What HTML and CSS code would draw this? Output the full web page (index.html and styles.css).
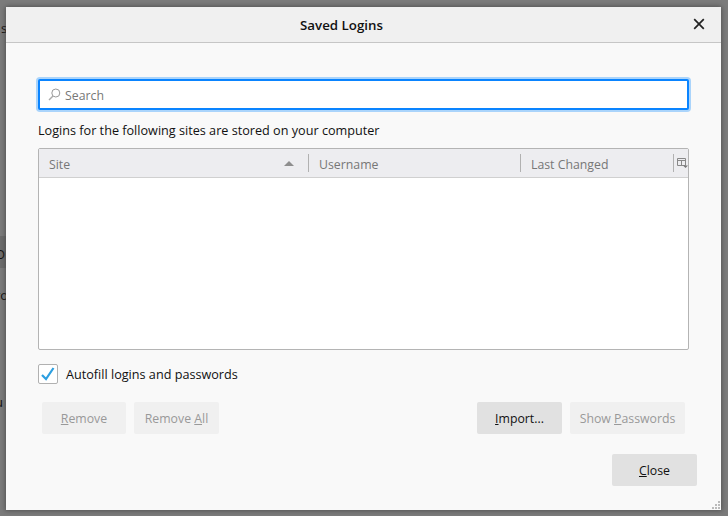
FILE: index.html
```html
<!DOCTYPE html>
<html lang="en">
<head>
<meta charset="utf-8">
<title>Saved Logins</title>
<link rel="stylesheet" href="styles.css">
</head>
<body>
<div class="behind">
  <span class="frag frag-s">s</span>
  <span class="frag-band"></span>
  <span class="frag frag-o">O</span>
  <span class="frag frag-r">ro</span>
  <span class="frag frag-u">u</span>
</div>
<main class="dialog">
  <header class="titlebar">
    <h1 class="title">Saved Logins</h1>
    <svg class="close-x" width="12" height="12" viewBox="0 0 12 12" aria-label="Close"><path d="M1.2 1.2 10.8 10.8M10.8 1.2 1.2 10.8" stroke="#222" stroke-width="1.7" fill="none"/></svg>
  </header>
  <div class="content">
    <div class="search">
      <svg class="search-icon" width="13" height="13" viewBox="0 0 13 13"><circle cx="7.8" cy="5" r="4" stroke="#999" stroke-width="1" fill="none"/><path d="M5 8 1 12" stroke="#aaa" stroke-width="1.5" fill="none"/></svg>
      <span class="placeholder">Search</span>
    </div>
    <p class="intro">Logins for the following sites are stored on your computer</p>
    <div class="table">
      <div class="thead">
        <div class="th th-site"><span>Site</span><i class="sort"></i></div>
        <div class="th th-user">Username</div>
        <div class="th th-date">Last Changed</div>
        <div class="th th-pick">
          <svg width="11" height="11" viewBox="0 0 11 11"><path d="M.5 .5h8v7h-8zM.5 2.5h8M4.5 2.5v5" stroke="#888" fill="none"/><path d="M6 7.5h5L8.5 10z" fill="#777"/></svg>
        </div>
      </div>
    </div>
    <label class="autofill">
      <span class="checkbox"><svg width="16" height="14" viewBox="0 0 16 14"><path d="M2 8l4 4 7.5-11" stroke="#2d9fe0" stroke-width="2.2" fill="none"/></svg></span>
      Autofill logins and passwords
    </label>
    <div class="actions">
      <div class="group">
        <button class="btn off w-remove" disabled><u>R</u>emove</button>
        <button class="btn off w-all" disabled>Remove <u>A</u>ll</button>
      </div>
      <div class="group">
        <button class="btn w-import"><u>I</u>mport...</button>
        <button class="btn off w-show" disabled>Show <u>P</u>asswords</button>
      </div>
    </div>
    <div class="footer">
      <button class="btn w-close"><u>C</u>lose</button>
    </div>
  </div>
  <svg class="grip" width="9" height="9" viewBox="0 0 9 9"><path d="M7 1h2v2H7zM4 4h2v2H4zM7 4h2v2H7zM1 7h2v2H1zM4 7h2v2H4zM7 7h2v2H7z" fill="#bbb"/></svg>
</main>
</body>
</html>
```
FILE: styles.css
```css
* { box-sizing: border-box; }
html, body { margin: 0; height: 100%; }
body {
  position: relative;
  overflow: hidden;
  background: #7b7b7b;
  font-family: "Open Sans", "Noto Sans", sans-serif;
  font-size: 12.65px;
  color: #111;
  padding: 7px 7px 6px 6px;
}
.behind { position: absolute; inset: 0; color: #111; }
.frag { position: absolute; left: -1px; line-height: 16px; font-size: 13px; }
.frag-s { top: 20px; left: 1px; }
.frag-o { top: 246px; left: -5px; }
.frag-r { top: 287px; left: -5px; }
.frag-u { top: 394px; left: -5px; }
.frag-band { position: absolute; left: 0; top: 236px; width: 6px; height: 32px; background: #6c6c6c; }
.dialog {
  position: relative;
  height: 503px;
  background: #f9f9f9;
  border-radius: 3px 3px 0 0;
  box-shadow: 0 0 4px 1px rgba(60,60,60,.6);
  display: flex;
  flex-direction: column;
}
.titlebar {
  height: 36px;
  flex: none;
  background: #f0f0f0;
  border-bottom: 1px solid #c6c6c6;
  display: flex;
  align-items: center;
  justify-content: center;
  padding-right: 44px;
  position: relative;
}
.title { margin: 0; font-size: 13.3px; font-weight: 600; color: #111; line-height: 36px; }
.close-x { position: absolute; right: 16px; top: 11px; }
.content { padding: 36px 32px 0 32px; display: flex; flex-direction: column; flex: 1; }
.search {
  height: 31px;
  background: #fff;
  border: 2px solid #0a84ff;
  border-radius: 2px;
  box-shadow: 0 0 0 2px #aad4fb;
  display: flex;
  align-items: center;
  padding-left: 8px;
  gap: 4px;
}
.placeholder { color: #777; line-height: 26px; font-size: 12.3px; margin-top: 2px; }
.intro { margin: 11px 0 0; line-height: 18px; height: 18px; }
.table {
  margin-top: 9px;
  height: 202px;
  flex: none;
  background: #fff;
  border: 1px solid #b4b4b4;
  border-radius: 2px;
}
.thead {
  height: 29px;
  background: #ededf0;
  border-bottom: 1px solid #d0d0d0;
  display: flex;
  align-items: center;
  color: #777;
  font-size: 12.3px;
}
.th { height: 18px; line-height: 22px; padding-left: 10px; border-left: 1px solid #b1b1b1; }
.th-site { width: 269px; border-left: 0; display: flex; justify-content: space-between; align-items: flex-start; padding-right: 14px; }
.th-user { width: 212px; }
.th-date { width: 153px; }
.th-pick { flex: 1; padding: 4px 0 0 3px; }
.th-pick svg { display: block; }
.sort { align-self: center; width: 0; height: 0; border: 5px solid transparent; border-top: 0; border-bottom: 5px solid #8e8e8e; }
.autofill { margin-top: 14px; height: 20px; display: flex; align-items: center; gap: 8px; }
.checkbox {
  width: 20px; height: 20px;
  background: #fff;
  border: 1px solid #b1b1b1;
  border-radius: 2px;
  display: flex;
  align-items: center;
  justify-content: center;
}
.actions { margin-top: 18px; display: flex; justify-content: space-between; padding: 0 4px; }
.group { display: flex; gap: 8px; }
.btn {
  height: 32px;
  border: 0;
  border-radius: 2px;
  background: #e1e1e1;
  color: #111;
  font: inherit;
  font-size: 12.3px;
  padding: 0;
}
.btn.off { background: #f0f0f0; color: #999; }
.w-remove { width: 84px; }
.w-all { width: 85px; }
.w-import { width: 85px; }
.w-show { width: 115px; }
.footer { margin-top: 20px; display: flex; justify-content: flex-end; margin-right: -8px; }
.w-close { width: 85px; }
.grip { position: absolute; right: 1px; bottom: 1px; }
```
